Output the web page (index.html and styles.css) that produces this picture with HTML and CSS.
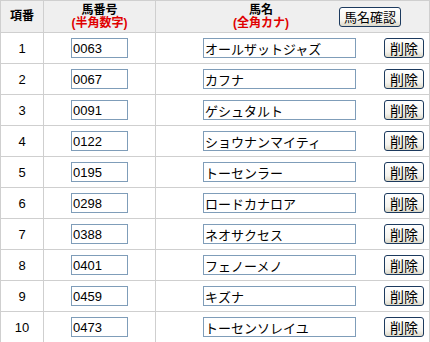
FILE: index.html
```html
<!DOCTYPE html>
<html lang="ja">
  <head>
    <meta charset="UTF-8" />
    <title>馬名登録</title>
    <link rel="stylesheet" href="styles.css">
  </head>
  <body>
    <table class="horse-table">
      <thead>
        <tr>
          <th class="col-no">項番</th>
          <th class="col-code">馬番号<br /><span class="note">(半角数字)</span></th>
          <th class="col-name">
            <div class="name-head">
              <div class="name-title">馬名<br /><span class="note">(全角カナ)</span></div>
              <button class="btn btn-check">馬名確認</button>
            </div>
          </th>
        </tr>
      </thead>
      <tbody>
        <tr>
          <td class="col-no">1</td>
          <td class="col-code"><input class="code" type="text" value="0063" /></td>
          <td class="col-name"><div class="name-cell"><input class="name" type="text" value="オールザットジャズ" /><button class="btn btn-del">削除</button></div></td>
        </tr>
        <tr>
          <td class="col-no">2</td>
          <td class="col-code"><input class="code" type="text" value="0067" /></td>
          <td class="col-name"><div class="name-cell"><input class="name" type="text" value="カフナ" /><button class="btn btn-del">削除</button></div></td>
        </tr>
        <tr>
          <td class="col-no">3</td>
          <td class="col-code"><input class="code" type="text" value="0091" /></td>
          <td class="col-name"><div class="name-cell"><input class="name" type="text" value="ゲシュタルト" /><button class="btn btn-del">削除</button></div></td>
        </tr>
        <tr>
          <td class="col-no">4</td>
          <td class="col-code"><input class="code" type="text" value="0122" /></td>
          <td class="col-name"><div class="name-cell"><input class="name" type="text" value="ショウナンマイティ" /><button class="btn btn-del">削除</button></div></td>
        </tr>
        <tr>
          <td class="col-no">5</td>
          <td class="col-code"><input class="code" type="text" value="0195" /></td>
          <td class="col-name"><div class="name-cell"><input class="name" type="text" value="トーセンラー" /><button class="btn btn-del">削除</button></div></td>
        </tr>
        <tr>
          <td class="col-no">6</td>
          <td class="col-code"><input class="code" type="text" value="0298" /></td>
          <td class="col-name"><div class="name-cell"><input class="name" type="text" value="ロードカナロア" /><button class="btn btn-del">削除</button></div></td>
        </tr>
        <tr>
          <td class="col-no">7</td>
          <td class="col-code"><input class="code" type="text" value="0388" /></td>
          <td class="col-name"><div class="name-cell"><input class="name" type="text" value="ネオサクセス" /><button class="btn btn-del">削除</button></div></td>
        </tr>
        <tr>
          <td class="col-no">8</td>
          <td class="col-code"><input class="code" type="text" value="0401" /></td>
          <td class="col-name"><div class="name-cell"><input class="name" type="text" value="フェノーメノ" /><button class="btn btn-del">削除</button></div></td>
        </tr>
        <tr>
          <td class="col-no">9</td>
          <td class="col-code"><input class="code" type="text" value="0459" /></td>
          <td class="col-name"><div class="name-cell"><input class="name" type="text" value="キズナ" /><button class="btn btn-del">削除</button></div></td>
        </tr>
        <tr>
          <td class="col-no">10</td>
          <td class="col-code"><input class="code" type="text" value="0473" /></td>
          <td class="col-name"><div class="name-cell"><input class="name" type="text" value="トーセンソレイユ" /><button class="btn btn-del">削除</button></div></td>
        </tr>
      </tbody>
    </table>
  </body>
</html>
```

FILE: styles.css
```css
body {
  margin: 0;
  background: #fff;
  font-family: "Liberation Sans", "Noto Sans CJK JP", sans-serif;
  font-size: 13px;
  color: #000;
}
.horse-table {
  border-collapse: collapse;
  width: 430px;
  table-layout: fixed;
}
.horse-table th,
.horse-table td {
  border: 1px solid #cfcfcf;
  padding: 0;
  text-align: center;
}
.horse-table th {
  background: #efefef;
  height: 31px;
  font-size: 12px;
  line-height: 13px;
  font-weight: bold;
}
.horse-table td {
  height: 30px;
}
.col-no {
  width: 42px;
}
.col-code {
  width: 111px;
}
.note {
  color: #e00000;
}
.name-head {
  display: flex;
  align-items: center;
  padding-left: 74px;
}
.name-title {
  width: 62px;
}
.name-cell {
  display: flex;
  align-items: center;
  padding-left: 47px;
}
input {
  box-sizing: border-box;
  height: 20px;
  border: 1px solid #7f9db9;
  padding: 0 1px;
  font-family: "Liberation Sans", "Noto Sans CJK JP", sans-serif;
  font-size: 13px;
  color: #000;
  background: #fff;
}
input.code {
  width: 57px;
}
input.name {
  width: 153px;
}
.btn {
  box-sizing: border-box;
  height: 20px;
  padding: 0;
  border: 1px solid #1c3a5e;
  border-radius: 3px;
  background: linear-gradient(#ffffff, #f4f3ee 70%, #dcd8c8);
  font-family: "Noto Sans CJK JP", sans-serif;
  font-size: 13px;
  line-height: 17px;
  color: #000;
}
.btn-del {
  width: 40px;
  margin-left: 28px;
  font-size: 14px;
}
.btn-check {
  width: 62px;
  margin-left: 47px;
  font-weight: normal;
}
```
